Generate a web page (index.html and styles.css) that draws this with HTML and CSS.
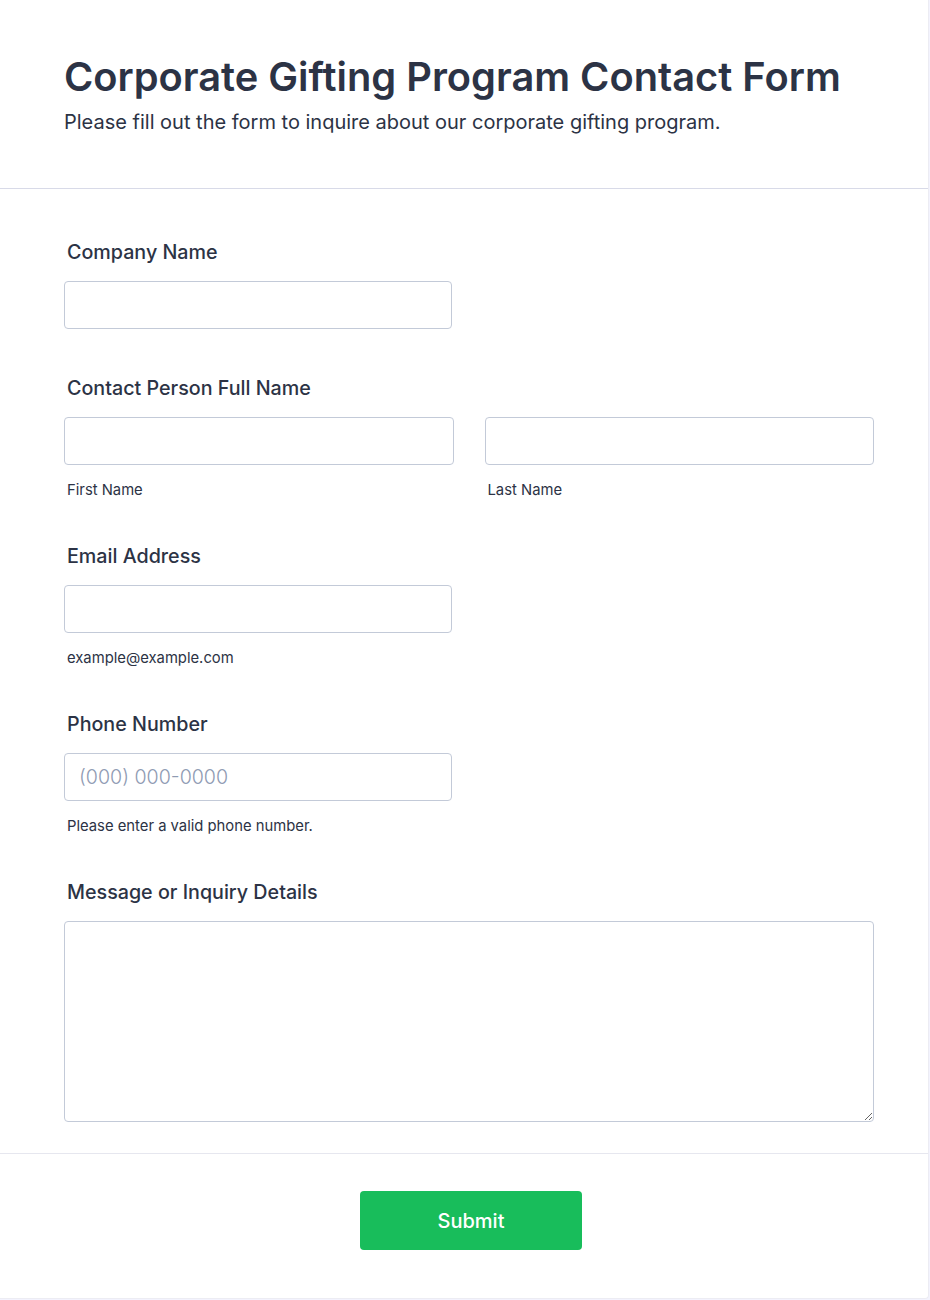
FILE: index.html
```html
<!DOCTYPE html>
<html lang="en">
<head>
<meta charset="utf-8">
<title>Corporate Gifting Program Contact Form</title>
<link rel="stylesheet" href="styles.css">
</head>
<body>
<div class="card">
  <header class="form-header">
    <h1 class="title">Corporate Gifting Program Contact Form</h1>
    <p class="subtitle">Please fill out the form to inquire about our corporate gifting program.</p>
  </header>
  <main class="fields">
    <div class="field">
      <label class="label">Company Name</label>
      <div class="row"><input class="input half" type="text"></div>
    </div>
    <div class="field">
      <label class="label">Contact Person Full Name</label>
      <div class="row two">
        <div class="col"><input class="input" type="text"><span class="sub">First Name</span></div>
        <div class="col"><input class="input" type="text"><span class="sub">Last Name</span></div>
      </div>
    </div>
    <div class="field">
      <label class="label">Email Address</label>
      <div class="row col"><input class="input half" type="text"><span class="sub">example@example.com</span></div>
    </div>
    <div class="field">
      <label class="label">Phone Number</label>
      <div class="row col"><input class="input half phone" type="text" placeholder="(000) 000-0000"><span class="sub">Please enter a valid phone number.</span></div>
    </div>
    <div class="field">
      <label class="label">Message or Inquiry Details</label>
      <div class="row"><textarea class="input area"></textarea></div>
    </div>
  </main>
  <footer class="form-footer">
    <button class="submit" type="button">Submit</button>
  </footer>
</div>
</body>
</html>
```
FILE: styles.css
```css
* { box-sizing: border-box; }
body {
  margin: 0;
  background: #f3f3fe;
  font-family: Inter, "Noto Sans", sans-serif;
  color: #2c3345;
}
.card {
  width: 929px;
  height: 1299px;
  background: #fff;
  border-right: 1px solid #ececf3;
  border-bottom: 1px solid #ececf3;
  border-radius: 0 0 4px 0;
}
.form-header {
  padding: 52px 64px 54px;
  border-bottom: 1px solid #d8dae8;
}
.title {
  margin: 0;
  font-size: 39.8px;
  line-height: 50px;
  font-weight: 600;
  color: #2c3345;
}
.subtitle {
  margin: 8px 0 0;
  font-size: 20px;
  line-height: 24px;
  font-weight: 400;
  color: #2c3345;
}
.fields {
  padding: 49px 54px 31px 64px;
  display: flex;
  flex-direction: column;
  gap: 45px;
}
.field {
  display: flex;
  flex-direction: column;
  gap: 17px;
}
.label {
  padding: 2px 0 0 3px;
  font-size: 19.7px;
  line-height: 24px;
  font-weight: 500;
  color: #2c3345;
}
.row { display: flex; }
.row.two { gap: 31px; }
.col { display: flex; flex-direction: column; gap: 18px; flex: 1; }
.row.col { flex: none; }
.input {
  width: 100%;
  height: 48px;
  border: 1px solid #c3cad8;
  border-radius: 4px;
  background: #fff;
  padding: 0 14px;
  font-family: Inter, sans-serif;
  font-size: 19px;
  color: #2c3345;
}
.input.half { width: 388px; }
.phone { font-size: 19.6px; }
.input::placeholder { color: #8f9bb3; font-weight: 300; }
.area { height: 201px; resize: vertical; }
.sub {
  padding-left: 3px;
  font-size: 14.8px;
  line-height: 14px;
  color: #2c3345;
}
.form-footer {
  border-top: 1px solid #e6e7ef;
  display: flex;
  justify-content: center;
  padding-top: 37px;
}
.submit {
  margin-left: 14px;
  width: 222px;
  height: 59px;
  border: 0;
  border-radius: 4px;
  background: #18bd5b;
  color: #fff;
  font-family: Inter, sans-serif;
  font-size: 20px;
  font-weight: 500;
}
```
